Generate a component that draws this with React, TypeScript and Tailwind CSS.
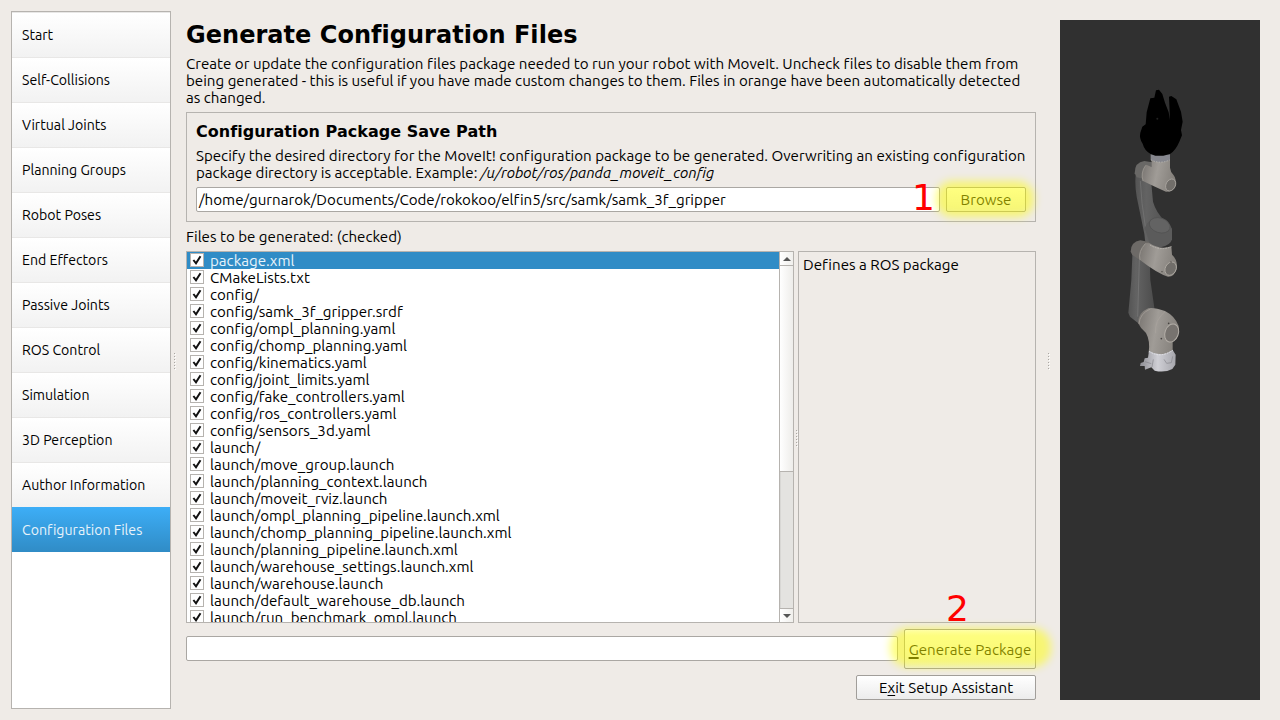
const steps = [
  "Start",
  "Self-Collisions",
  "Virtual Joints",
  "Planning Groups",
  "Robot Poses",
  "End Effectors",
  "Passive Joints",
  "ROS Control",
  "Simulation",
  "3D Perception",
  "Author Information",
  "Configuration Files",
];

const files = [
  "package.xml",
  "CMakeLists.txt",
  "config/",
  "config/samk_3f_gripper.srdf",
  "config/ompl_planning.yaml",
  "config/chomp_planning.yaml",
  "config/kinematics.yaml",
  "config/joint_limits.yaml",
  "config/fake_controllers.yaml",
  "config/ros_controllers.yaml",
  "config/sensors_3d.yaml",
  "launch/",
  "launch/move_group.launch",
  "launch/planning_context.launch",
  "launch/moveit_rviz.launch",
  "launch/ompl_planning_pipeline.launch.xml",
  "launch/chomp_planning_pipeline.launch.xml",
  "launch/planning_pipeline.launch.xml",
  "launch/warehouse_settings.launch.xml",
  "launch/warehouse.launch",
  "launch/default_warehouse_db.launch",
  "launch/run_benchmark_ompl.launch",
];

function Sidebar() {
  const active = steps.length - 1;
  return (
    <nav className="h-[698px] w-[160px] shrink-0 border border-[#b6b3af] bg-white text-[14.15px]">
      {steps.map((step, i) => (
        <div
          key={step}
          className={
            i === active
              ? "flex h-[45px] items-center bg-linear-to-b from-[#3daef7] to-[#308cc6] pt-px pl-[10px] text-[#e8f3fa]"
              : "flex h-[45px] items-center border-t border-[#e8e7e6] bg-linear-to-b from-white to-[#f2f2f2] pl-[10px]"
          }
        >
          {step}
        </div>
      ))}
    </nav>
  );
}

function CheckBox() {
  return (
    <svg width="14" height="14" viewBox="0 0 14 14" className="mb-px shrink-0">
      <rect x=".5" y=".5" width="13" height="13" fill="#fff" stroke="#b6b3af" />
      <path d="M3.4 7 6 10.300 10.500 3.300" fill="none" stroke="#111" strokeWidth="2" />
    </svg>
  );
}

function ScrollBar() {
  return (
    <div className="flex w-[14px] shrink-0 flex-col border-l border-[#b6b3af]">
      <div className="flex h-[14px] items-center justify-center border-b border-[#b6b3af] bg-linear-to-r from-white to-[#f0efec]">
        <svg width="8" height="4" viewBox="0 0 8 4"><path d="M0 4 4 0 8 4Z" fill="#555" /></svg>
      </div>
      <div className="h-[206px] border-b border-[#b6b3af] bg-linear-to-r from-white to-[#eeedea]" />
      <div className="grow border-l border-[#d8d7d4] bg-[#e4e3e0]" />
      <div className="flex h-[14px] items-center justify-center border-t border-[#b6b3af] bg-linear-to-r from-white to-[#f0efec]">
        <svg width="8" height="4" viewBox="0 0 8 4"><path d="M0 0 4 4 8 0Z" fill="#555" /></svg>
      </div>
    </div>
  );
}

function Grip() {
  return (
    <svg width="3" height="18" viewBox="0 0 3 18" className="shrink-0">
      {[0, 3, 6, 9, 12, 15].map((y) => (
        <g key={y}>
          <rect x="1" y={y + 1} width="1" height="1" fill="#aaa7a3" />
          <rect x="2" y={y + 2} width="1" height="1" fill="#fff" />
        </g>
      ))}
    </svg>
  );
}

function RobotView() {
  return (
    <svg width="200" height="680" viewBox="0 0 200 680" className="shrink-0 bg-[#303030]">
      <defs>
        <linearGradient id="shell" x1="0" x2="1" y1="0" y2=".2">
          <stop offset="0" stopColor="#77736f" />
          <stop offset=".5" stopColor="#a09c97" />
          <stop offset="1" stopColor="#85817c" />
        </linearGradient>
        <linearGradient id="arm" x1="0" x2="1">
          <stop offset="0" stopColor="#545454" />
          <stop offset=".3" stopColor="#636363" />
          <stop offset="1" stopColor="#4c4c4c" />
        </linearGradient>
        <linearGradient id="base" x1="0" x2="1">
          <stop offset="0" stopColor="#8e8e94" />
          <stop offset=".5" stopColor="#cfcfd5" />
          <stop offset="1" stopColor="#a5a5ab" />
        </linearGradient>
      </defs>
      <g transform="translate(50 60) scale(.33333)">
        {/* upper link */}
        <path d="M77 285Q74 315 80 350L94 418 103 462Q106 500 120 532 125 502 185 470L186 448Q180 432 166 424 139 400 129 365L123 300Z" fill="url(#arm)" />
        <path d="M91 303Q94 370 106 440" fill="none" stroke="#787878" strokeWidth="2" />
        <path d="M104 445Q112 418 145 412 174 414 186 448L186 478Q182 496 152 502 128 502 120 492Z" fill="#5b5b5b" />
        <ellipse cx="149" cy="436" rx="32" ry="22" transform="rotate(18 149 436)" fill="#636363" stroke="#505050" strokeWidth="2" />
        {/* wrist */}
        <path d="M74 280Q74 246 103 243L126 247 122 275 99 296 80 292Z" fill="#696866" />
        <path d="M125 240H180V263Q181 275 191 286 201 298 195 320 188 335 168 335 142 324 99 303 91 278 109 254L124 261Z" fill="url(#shell)" />
        <path d="M99 303Q91 278 107 256" fill="none" stroke="#aaa69f" strokeWidth="2" />
        <path d="M122 223H180V240Q151 254 122 240Z" fill="#85868d" />
        <path d="M123 240Q151 253 179 240" fill="none" stroke="#b4b3ae" strokeWidth="3" strokeDasharray="4 4" />
        <ellipse cx="182" cy="315" rx="14" ry="19" transform="rotate(28 182 315)" fill="#716e6a" stroke="#aaa6a0" strokeWidth="2.500" />
        {/* gripper */}
        <path d="M122 222Q103 211 98 191 87 175 91 158L97 140 107 133 110 97 121 55 133 53 138 31 147 29 157 42 165 68 176 97 180 120 177 50 184 48 199 58 213 95 218 125 213 150 216 166 208 185Q197 211 180 222L160 227H136Z" fill="#000" />
        <circle cx="142" cy="116" r="3" fill="#222" />
        {/* lower link */}
        <path d="M68 504 64 600 55 698 60 710 84 729 134 690 121 600 119 530Z" fill="url(#arm)" />
        <path d="M88 540 83 710" stroke="#727272" strokeWidth="3" />
        {/* elbow */}
        <path d="M62 515Q62 486 91 481L117 486 112 510 90 540 67 525Z" fill="#6d6a67" />
        <path d="M119 490Q151 511 184 499L186 524Q204 540 200 567 193 591 174 590 143 581 90 540 82 518 107 489Z" fill="url(#shell)" />
        <path d="M90 540Q84 514 106 491" fill="none" stroke="#aaa69f" strokeWidth="2" />
        <path d="M120 495Q151 514 184 500" fill="none" stroke="#b8b5b0" strokeWidth="3" strokeDasharray="5 3" />
        <ellipse cx="182" cy="566" rx="16" ry="21" transform="rotate(28 182 566)" fill="#716e6a" stroke="#afaba4" strokeWidth="2.500" />
        <circle cx="183" cy="546" r="2" fill="#45423f" />
        <circle cx="156" cy="575" r="2" fill="#45423f" />
        {/* shoulder */}
        <path d="M84 729Q84 698 115 685 130 681 165 693 195 708 206 738 210 772 188 785V820Q152 837 116 818 121 782 108 759 92 746 84 729Z" fill="url(#shell)" />
        <path d="M87 732Q89 701 121 687M137 760Q133 720 165 695" fill="none" stroke="#aaa59e" strokeWidth="2" />
        <ellipse cx="185" cy="759" rx="20" ry="28" transform="rotate(20 185 759)" fill="#77736f" stroke="#b3aea7" strokeWidth="3" />
        <circle cx="176" cy="730" r="2.500" fill="#45423f" />
        <circle cx="154" cy="776" r="2.500" fill="#45423f" />
        {/* base */}
        <path d="M117 812Q151 834 188 810L197 824 196 854 187 867Q164 879 134 872L124 862 105 869 104 858 90 858 92 849 101 846 104 835 114 833Z" fill="url(#base)" />
        <path d="M117 814Q151 836 188 811" fill="none" stroke="#e2e2e6" strokeWidth="3" strokeDasharray="5 3" />
        <path d="M130 838 126 861M162 838 170 850 184 848 188 829M105 845 124 851" fill="none" stroke="#85858b" strokeWidth="2" />
      </g>
    </svg>
  );
}

export default function App() {
  return (
    <div className="flex h-[720px] w-[1280px] overflow-hidden bg-[#efebe7] font-[Ubuntu,'Noto_Sans',sans-serif] text-[15.13px] leading-[17px] whitespace-nowrap text-black [font-variant-ligatures:none]">
      <div className="flex pt-[11px] pl-[11px]">
        <Sidebar />
      </div>
      <div className="flex w-[15px] items-center pt-[2px] pl-[2px]">
        <Grip />
      </div>
      <main className="flex w-[850px] shrink-0 flex-col pt-[21px]">
        <h1 className="h-[34px] font-['DejaVu_Sans'] text-[24px] leading-[29px] font-bold tracking-[0.03px]">Generate Configuration Files</h1>
        <p className="h-[57px]">
          Create or update the configuration files package needed to run your robot with MoveIt. Uncheck files to disable them from
          <br />
          being generated - this is useful if you have made custom changes to them. Files in orange have been automatically detected
          <br />
          as changed.
        </p>
        <section className="h-[110px] border border-[#b6b3af] px-[9px] pt-[9px]">
          <h2 className="h-[25px] font-['DejaVu_Sans'] text-[16px] leading-[19px] font-bold tracking-[0.03px]">Configuration Package Save Path</h2>
          <p>
            Specify the desired directory for the MoveIt! configuration package to be generated. Overwriting an existing configuration
            <br />
            package directory is acceptable. Example: <i>/u/robot/ros/panda_moveit_config</i>
          </p>
          <div className="mt-[6px] flex gap-[6px]">
            <div className="relative flex h-[25px] w-[744px] items-center rounded-[2px] border border-[#aaa7a3] bg-white pl-[2px]">
              /home/gurnarok/Documents/Code/rokokoo/elfin5/src/samk/samk_3f_gripper
              <span className="absolute top-[-11px] left-[715px] z-20 font-['DejaVu_Sans'] text-[36px] leading-[42px] text-[#ff0000]">1</span>
            </div>
            <button className="relative flex h-[25px] w-[80px] items-center justify-center rounded-[2px] border border-[#a19e9a] bg-linear-to-b from-white to-[#ececec]">
              Browse
              <span className="absolute -top-[7px] -right-[9px] -bottom-[6px] -left-[11px] z-10 rounded-[16px] bg-[#ffff00]/50 blur-[4px]" />
            </button>
          </div>
        </section>
        <div className="mt-[6px] h-[23px]">Files to be generated: (checked)</div>
        <div className="flex h-[372px]">
          <div className="flex w-[608px] border border-[#b6b3af] bg-white">
            <ul className="h-[370px] grow overflow-hidden">
              {files.map((file, i) => (
                <li
                  key={file}
                  className={
                    i === 0
                      ? "flex h-[17px] items-center gap-[6px] bg-[#308cc6] pl-[3px] text-[#e8f3fa]"
                      : "flex h-[17px] items-center gap-[6px] pl-[3px]"
                  }
                >
                  <CheckBox />
                  <span>{file}</span>
                </li>
              ))}
            </ul>
            <ScrollBar />
          </div>
          <div className="flex w-[4px] items-center pt-[2px] pl-px">
            <Grip />
          </div>
          <div className="relative w-[238px] border border-[#b6b3af] pt-[4px] pl-[4px]">
            Defines a ROS package
            <span className="absolute top-[336px] left-[147px] font-['DejaVu_Sans'] text-[36px] leading-[42px] text-[#ff0000]">2</span>
          </div>
        </div>
        <div className="mt-[6px] flex items-start justify-between">
          <div className="mt-[7px] h-[25px] w-[712px] rounded-[2px] border border-[#aaa7a3] bg-white" />
          <button className="relative flex h-[40px] w-[132px] items-center justify-center rounded-[2px] border border-[#a19e9a] bg-linear-to-b from-white to-[#ececec]">
            <span><span className="underline decoration-2 underline-offset-2">G</span>enerate Package</span>
            <span className="absolute -top-[2px] -right-[16px] bottom-[1px] -left-[15px] z-10 rounded-[18px] bg-[#ffff00]/50 blur-[4px]" />
          </button>
        </div>
        <button className="mt-[6px] flex h-[25px] w-[180px] items-center justify-center self-end rounded-[2px] border border-[#a19e9a] bg-linear-to-b from-white to-[#ececec]">
          <span>E<span className="underline decoration-1 underline-offset-2">x</span>it Setup Assistant</span>
        </button>
      </main>
      <div className="flex w-[24px] items-center pt-[2px] pl-[11px]">
        <Grip />
      </div>
      <div className="pt-[20px]">
        <RobotView />
      </div>
    </div>
  );
}
